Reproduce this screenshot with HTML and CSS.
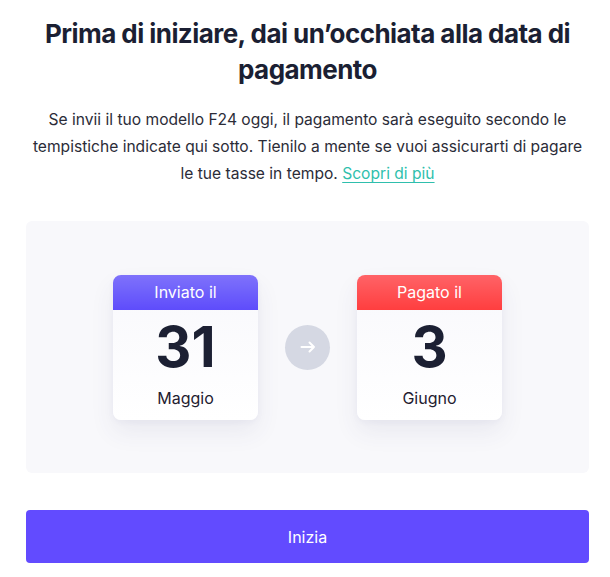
FILE: index.html
```html
<!DOCTYPE html>
<html lang="it">
<head>
<meta charset="utf-8">
<link rel="stylesheet" href="styles.css">
</head>
<body>
<main class="page">
  <h1 class="title">Prima di iniziare, dai un’occhiata alla data di pagamento</h1>
  <p class="lead">Se invii il tuo modello F24 oggi, il pagamento sarà eseguito secondo le tempistiche indicate qui sotto. Tienilo a mente se vuoi assicurarti di pagare le tue tasse in tempo. <a class="link" href="#">Scopri di più</a></p>
  <section class="panel">
    <div class="card">
      <div class="card-head head-blue">Inviato il</div>
      <div class="card-body">
        <div class="day">31</div>
        <div class="month">Maggio</div>
      </div>
    </div>
    <div class="arrow">
      <svg width="16" height="12" viewBox="0 0 16 12" fill="none" stroke="#fff" stroke-width="2" stroke-linecap="round" stroke-linejoin="round"><path d="M1.5 6h12.5M9.5 1.5 14 6l-4.5 4.5"/></svg>
    </div>
    <div class="card">
      <div class="card-head head-red">Pagato il</div>
      <div class="card-body">
        <div class="day">3</div>
        <div class="month">Giugno</div>
      </div>
    </div>
  </section>
  <button class="btn">Inizia</button>
</main>
</body>
</html>
```
FILE: styles.css
```css
* { box-sizing: border-box; }
html, body { margin: 0; padding: 0; background: #fff; }
body {
  font-family: Inter, "Noto Sans", "Liberation Sans", sans-serif;
  color: #1c2033;
}
.page {
  width: 563px;
  margin-left: 26px;
  padding-top: 16px;
  display: flex;
  flex-direction: column;
  align-items: stretch;
}
.title {
  margin: 0 -6px;
  font-size: 26px;
  line-height: 36px;
  font-weight: 700;
  text-align: center;
  letter-spacing: -0.55px;
  color: #1b1f33;
}
.lead {
  margin: 18px 0 0;
  font-size: 15.6px;
  line-height: 27px;
  text-align: center;
  color: #2b2c38;
  padding: 0 4px;
}
.link {
  color: #2fbfad;
  text-decoration: underline;
  text-underline-offset: 3px;
}
.panel {
  margin-top: 34px;
  height: 252px;
  background: #f8f8fb;
  border-radius: 6px;
  display: flex;
  align-items: center;
  justify-content: center;
  gap: 27px;
}
.card {
  width: 145px;
  height: 145px;
  border-radius: 8px;
  background: linear-gradient(#f8f8fc, #ffffff);
  box-shadow: 0 12px 24px rgba(60, 60, 120, 0.08), 0 2px 6px rgba(60, 60, 120, 0.04);
  display: flex;
  flex-direction: column;
  overflow: hidden;
}
.card-head {
  height: 35px;
  display: flex;
  align-items: center;
  justify-content: center;
  color: #fff;
  font-size: 16px;
  opacity: 0.98;
}
.head-blue { background: linear-gradient(#7d70fb, #5b49fb); }
.head-red { background: linear-gradient(#ff6064, #ff3b3c); }
.card-body {
  flex: 1;
  display: flex;
  flex-direction: column;
  align-items: center;
  padding-top: 9px;
}
.day {
  font-size: 56px;
  line-height: 56px;
  font-weight: 700;
  color: #1c2033;
}
.month {
  margin-top: 12px;
  font-size: 16px;
  line-height: 22px;
  color: #1f2030;
}
.arrow {
  width: 45px;
  height: 45px;
  border-radius: 50%;
  background: #d5d8e3;
  display: flex;
  align-items: center;
  justify-content: center;
}
.btn {
  margin-top: 37px;
  height: 53px;
  border: 0;
  border-radius: 4px;
  background: #624bff;
  color: #fff;
  font-family: inherit;
  font-size: 16px;
  font-weight: 400;
}
```
